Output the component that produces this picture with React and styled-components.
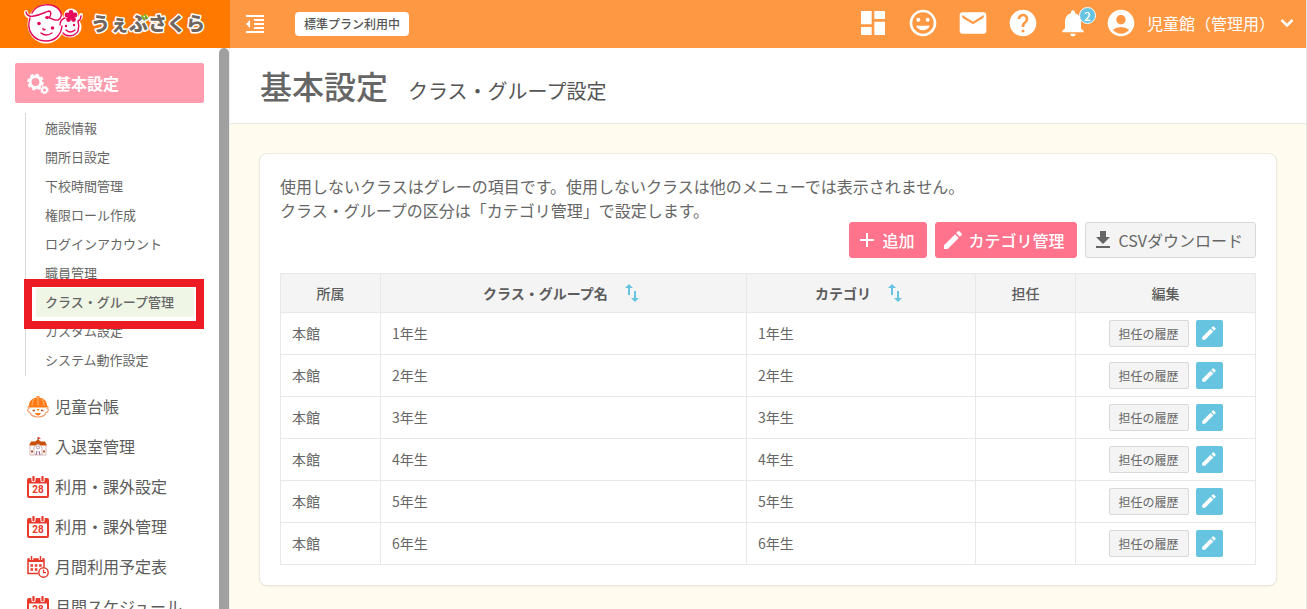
import React from 'react'
import styled, { createGlobalStyle } from 'styled-components';
import {
    MdAccountCircle,
    MdAdd,
    MdDashboard,
    MdEdit,
    MdEmail,
    MdFormatIndentDecrease,
    MdGetApp,
    MdHelp,
    MdImportExport,
    MdMood,
    MdNotifications,
} from 'react-icons/md';

const settingLinks = [
    '施設情報',
    '開所日設定',
    '下校時間管理',
    '権限ロール作成',
    'ログインアカウント',
    '職員管理',
    'クラス・グループ管理',
    'カスタム設定',
    'システム動作設定',
];
const activeLink = 'クラス・グループ管理';

const classes = [1, 2, 3, 4, 5, 6].map(grade => ({
    id: grade,
    place: '本館',
    name: `${grade}年生`,
    category: `${grade}年生`,
}));

const LogoImage = () => (
    <svg viewBox="0 0 230 48" width="230" height="48" role="img" aria-label="うぇぶさくら">
        <g fill="#fff" stroke="#fff" strokeWidth="3">
            <ellipse cx="46" cy="24" rx="17" ry="18" />
            <ellipse cx="70" cy="27" rx="10" ry="9" />
            <circle cx="71" cy="16" r="6" />
            <path d="M26 12q0 4 5 5M81 15q0 4-4 5" fill="none" strokeWidth="4" strokeLinecap="round" />
        </g>
        <g fill="none" stroke="#e5085a" strokeWidth="1.4" strokeLinecap="round">
            <path d="M30 18c-4 12 3 23 16 23 9 0 15-6 16-15" />
            <path d="M26 12c1 4 4 5 8 4 7-1 11-4 15-5 3 1 2 6-1 7s-3-2 0-1 6 4 10 3c4-2 4-6 2-9-6-9-23-8-28 2" />
            <path d="M63 33c3 4 12 4 15-2 1-4 1-7 0-10 2-1 3-3 3-5" />
            <path d="M60 25c0-3 2-6 5-7M41 33q5 4 11 0M43 28.500q0 2 2 1M66 30q4 4 9 0" />
        </g>
        <g fill="#e5085a">
            <circle cx="39" cy="23.500" r="1.800" />
            <circle cx="52.500" cy="28" r="1.800" />
            <circle cx="66" cy="26" r="1.200" />
            <circle cx="74" cy="25" r="1.200" />
            <circle cx="71" cy="12.500" r="2.400" />
            <circle cx="75" cy="15" r="2.400" />
            <circle cx="73.500" cy="19.500" r="2.400" />
            <circle cx="68.500" cy="19.500" r="2.400" />
            <circle cx="67" cy="15" r="2.400" />
            <circle cx="71" cy="16" r="3" />
        </g>
        <LogoText x="91" y="31">うぇぶさくら</LogoText>
        <path d="M142 16l2 3M145 15l2 3" stroke="#7cb518" strokeWidth="2" strokeLinecap="round" />
    </svg>
)

const ChevronIcon = () => (
    <svg viewBox="0 0 24 24" width="24" height="24" fill="none" stroke="currentColor" strokeWidth="2.500" aria-hidden="true">
        <path d="M6.500 9l5.500 5.500L17.500 9" />
    </svg>
)

const GearsIcon = () => (
    <svg viewBox="0 0 22 22" width="22" height="22" fill="none" stroke="#fff" aria-hidden="true">
        <circle cx="8.500" cy="9" r="5.400" strokeWidth="3" />
        <circle cx="8.500" cy="9" r="7" strokeWidth="2.600" strokeDasharray="3.200 2.298" />
        <circle cx="17.500" cy="17" r="2.500" strokeWidth="1.800" />
        <circle cx="17.500" cy="17" r="3.500" strokeWidth="1.400" strokeDasharray="1.600 1.149" />
    </svg>
)

const ChildIcon = () => (
    <svg viewBox="0 0 22 22" width="22" height="22" fill="none" aria-hidden="true">
        <path d="M2.500 12.500C0 12 0 16 3 16.500c1 3 4 4.500 8 4.500s7-1.500 8-4.500c3-.5 3-4.500.5-4" stroke="#f39a6b" strokeWidth="1.100" />
        <path d="M2 9.500C2 4.500 6 1.500 11 1.500s9 3 9 8l2 2H0z" fill="#ff7a14" />
        <path d="M7.500 3C5.500 5 5 7 5 9.500M14.500 3c2 2 2.500 4 2.500 6.500M11 2v7.500" stroke="#ffd3ae" strokeWidth=".7" />
        <path d="M9.500.800h3" stroke="#ff7a14" strokeWidth="1.400" />
        <path d="M9.500 13h3l-1.500 2z" fill="#ff7a14" />
        <path d="M5.500 14.500h2.500M14 14.500h2.500" stroke="#b5562a" strokeWidth="1.400" />
        <path d="M8 17h6q-1 2.500-3 2.500t-3-2.500z" fill="#ff7a14" />
    </svg>
)

const SchoolIcon = () => (
    <svg viewBox="0 0 22 22" width="22" height="22" fill="none" aria-hidden="true">
        <path d="M11 6V1" stroke="#7d4a3a" />
        <path d="M11 1l3 1.200-3 1.300z" fill="#e83828" />
        <path d="M2 9.500l2-4h4l3-2 3 2h4l2 4z" fill="#c8500a" />
        <path d="M3 10v9h16v-9M7 19v-8l4-3 4 3v8" fill="#fff" stroke="#d3b0b0" strokeWidth=".9" />
        <circle cx="11" cy="11.500" r="1.500" stroke="#a98a9a" strokeWidth=".8" />
        <path d="M9 19l1-4M13 19l-1-4" stroke="#8d5a86" />
        <path d="M4 14.500h2v2H4zM16 14.500h2v2h-2z" fill="#b0522a" />
    </svg>
)

const CalendarIcon = () => (
    <svg viewBox="0 0 22 22" width="22" height="22" aria-hidden="true">
        <path d="M2 2h18a2 2 0 0 1 2 2v16a2 2 0 0 1-2 2H2a2 2 0 0 1-2-2V4a2 2 0 0 1 2-2z" fill="#e8392b" />
        <path d="M2 7.500h18v12.500H2z" fill="#fff" />
        <path d="M6.500 0v4M15.500 0v4" stroke="#fff" strokeWidth="4.400" strokeLinecap="round" />
        <path d="M6.500 1v3.500M15.500 1v3.500" stroke="#e8392b" strokeWidth="2.200" strokeLinecap="round" />
        <CalendarDay x="11" y="17">28</CalendarDay>
    </svg>
)

const CalendarClockIcon = () => (
    <svg viewBox="0 0 22 22" width="22" height="22" fill="none" stroke="#e8392b" aria-hidden="true">
        <path d="M11 17.500H1V3h16v8" strokeWidth="1.500" />
        <path d="M1 4.500h16" strokeWidth="3" />
        <path d="M4.500 0v4M13.500 0v4" stroke="#fff" strokeWidth="3.500" />
        <path d="M4.500 0v4M13.500 0v4" strokeWidth="1.500" />
        <path d="M3.500 9.500H15M3.500 13.500H12" strokeWidth="2.400" strokeDasharray="2.600 1.700" />
        <circle cx="16.500" cy="16.500" r="4.700" fill="#fff" strokeWidth="1.500" />
        <path d="M16.500 13.500v3.200h2.500" strokeWidth="1.300" />
    </svg>
)

const menus = [
    { label: '児童台帳', Icon: ChildIcon },
    { label: '入退室管理', Icon: SchoolIcon },
    { label: '利用・課外設定', Icon: CalendarIcon },
    { label: '利用・課外管理', Icon: CalendarIcon },
    { label: '月間利用予定表', Icon: CalendarClockIcon },
    { label: '月間スケジュール', Icon: CalendarIcon },
];

const Header = () => (
    <HeaderBar>
        <Logo href="#"><LogoImage /></Logo>
        <HeaderLeft>
            <IconButton aria-label="メニューを閉じる"><MdFormatIndentDecrease size={24} /></IconButton>
            <PlanLabel>標準プラン利用中</PlanLabel>
        </HeaderLeft>
        <HeaderRight>
            <IconButton aria-label="ダッシュボード"><MdDashboard size={32} /></IconButton>
            <IconButton aria-label="児童"><MdMood size={32} /></IconButton>
            <IconButton aria-label="メール"><MdEmail size={32} /></IconButton>
            <IconButton aria-label="ヘルプ"><MdHelp size={32} /></IconButton>
            <IconButton aria-label="お知らせ">
                <MdNotifications size={32} />
                <Count>2</Count>
            </IconButton>
            <Account>
                <MdAccountCircle size={32} />
                <AccountName>児童館（管理用）</AccountName>
                <ChevronIcon />
            </Account>
        </HeaderRight>
    </HeaderBar>
)

const Sidebar = () => (
    <Side>
        <SideMenu>
            <CurrentMenu href="#"><GearsIcon />基本設定</CurrentMenu>
            <SubList>
                {settingLinks.map(label => (
                    <li key={label}>
                        <SubLink href="#" $active={label === activeLink}>
                            {label}
                            {label === activeLink && <Marker />}
                        </SubLink>
                    </li>
                ))}
            </SubList>
            {menus.map(({ label, Icon }) => (
                <MenuLink key={label} href="#"><Icon />{label}</MenuLink>
            ))}
        </SideMenu>
        <ScrollThumb />
    </Side>
)

const ClassTable = () => (
    <Table>
        <colgroup>
            <Col $width="100px" />
            <Col />
            <Col $width="23.5%" />
            <Col $width="100px" />
            <Col $width="180px" />
        </colgroup>
        <thead>
            <tr>
                <Th>所属</Th>
                <Th $sortable><Sort>クラス・グループ名<MdImportExport size={24} /></Sort></Th>
                <Th $sortable><Sort>カテゴリ<MdImportExport size={24} /></Sort></Th>
                <Th>担任</Th>
                <Th>編集</Th>
            </tr>
        </thead>
        <tbody>
            {classes.map(item => (
                <tr key={item.id}>
                    <Td>{item.place}</Td>
                    <Td>{item.name}</Td>
                    <Td>{item.category}</Td>
                    <Td />
                    <Td>
                        <RowActions>
                            <HistoryButton>担任の履歴</HistoryButton>
                            <EditButton aria-label={`${item.name}を編集`}><MdEdit size={18} /></EditButton>
                        </RowActions>
                    </Td>
                </tr>
            ))}
        </tbody>
    </Table>
)

const App = () => {
    return (
        <Page>
            <GlobalStyle />
            <Header />
            <Body>
                <Sidebar />
                <Main>
                    <TitleBar>
                        <Title>基本設定</Title>
                        <SubTitle>クラス・グループ設定</SubTitle>
                    </TitleBar>
                    <Card>
                        <Lead>
                            使用しないクラスはグレーの項目です。使用しないクラスは他のメニューでは表示されません。<br />
                            クラス・グループの区分は「カテゴリ管理」で設定します。
                        </Lead>
                        <Actions>
                            <ActionButton $primary><MdAdd size={24} />追加</ActionButton>
                            <ActionButton $primary><MdEdit size={24} />カテゴリ管理</ActionButton>
                            <ActionButton><MdGetApp size={24} />CSVダウンロード</ActionButton>
                        </Actions>
                        <ClassTable />
                    </Card>
                </Main>
            </Body>
        </Page>
    )
}

export default App

const GlobalStyle = createGlobalStyle`
    * {
        box-sizing: border-box;
    }
    body {
        margin: 0;
        color: #666;
        font-family: "Noto Sans CJK JP", "Noto Sans", sans-serif;
        font-size: 16px;
    }
    button {
        font-family: inherit;
        cursor: pointer;
    }
    a {
        color: inherit;
        text-decoration: none;
    }
    svg {
        flex: none;
    }
`;

const Page = styled.div`
    display: flex;
    flex-direction: column;
    height: 100vh;
    overflow: hidden;
    border-right: 1px solid #e4e4e4;
`;

const HeaderBar = styled.header`
    display: flex;
    flex: none;
    height: 48px;
    background: #ff9843;
    color: #fff;
`;

const Logo = styled.a`
    display: flex;
    width: 230px;
    background: #ff7800;
`;

const LogoText = styled.text`
    fill: #70665f;
    stroke: #fff;
    stroke-width: 3px;
    stroke-linejoin: round;
    paint-order: stroke;
    font-size: 19px;
    font-weight: 900;
`;

const CalendarDay = styled.text`
    fill: #e8392b;
    font-family: "Roboto", sans-serif;
    font-size: 10px;
    font-weight: 700;
    text-anchor: middle;
`;

const HeaderLeft = styled.div`
    display: flex;
    align-items: center;
    gap: 28px;
    padding-left: 13px;
    padding-bottom: 1px;
`;

const HeaderRight = styled.div`
    display: flex;
    align-items: center;
    gap: 18px;
    margin-left: auto;
    padding-right: 7px;
    padding-bottom: 2px;
`;

const IconButton = styled.button`
    position: relative;
    display: flex;
    padding: 0;
    border: 0;
    background: none;
    color: inherit;
`;

const Count = styled.span`
    position: absolute;
    top: 0;
    right: -7px;
    width: 17px;
    height: 17px;
    border: 1px solid #fff;
    border-radius: 50%;
    background: #67c4e0;
    font-size: 12px;
    font-weight: 500;
    line-height: 15px;
    text-align: center;
`;

const Account = styled(IconButton)`
    align-items: center;
    margin-left: -2px;
    font-size: 16px;
`;

const AccountName = styled.span`
    margin-left: 10px;
`;

const PlanLabel = styled.span`
    padding: 0 9px;
    border-radius: 4px;
    background: #fff;
    color: #555;
    font-size: 12px;
    font-weight: 500;
    line-height: 24px;
`;

const Body = styled.div`
    display: flex;
    flex: 1;
    min-height: 0;
`;

const Side = styled.aside`
    display: flex;
    flex: none;
    width: 230px;
    overflow: hidden;
    border-right: 1px solid #eee;
`;

const SideMenu = styled.nav`
    flex: 1;
    padding: 15px;
`;

const ScrollThumb = styled.div`
    width: 10px;
    border-radius: 5px 5px 0 0;
    background: #a0a0a0;
`;

const MenuLink = styled.a`
    display: flex;
    align-items: center;
    gap: 6px;
    height: 40px;
    padding-left: 12px;
    color: #5c5c5c;
    white-space: nowrap;

    svg {
        margin-top: 2px;
    }
`;

const CurrentMenu = styled(MenuLink)`
    border-radius: 2px;
    background: #ff9dae;
    color: #fff;
    font-weight: 700;
`;

const SubList = styled.ul`
    margin: 10px;
    padding: 1px 0;
    border-left: 1px solid #d8d8d8;
    list-style: none;
`;

const SubLink = styled.a`
    position: relative;
    display: block;
    margin-left: 10px;
    padding: 0 0 2px 9px;
    border-radius: 2px;
    background: ${({ $active }) => $active ? '#f0f6e6' : 'none'};
    font-size: 13px;
    font-weight: ${({ $active }) => $active ? 500 : 400};
    line-height: 27px;
`;

const Marker = styled.span`
    position: absolute;
    inset: -9px -10px -12px -12px;
    z-index: 1;
    border: 8px solid #ed1c24;
`;

const Main = styled.main`
    flex: 1;
    min-width: 0;
    overflow: hidden;
    background: #fffbee;
`;

const TitleBar = styled.div`
    display: flex;
    align-items: baseline;
    gap: 20px;
    height: 76px;
    padding: 13px 30px 0;
    border-bottom: 1px solid #e9e9e9;
    background: #fff;
`;

const Title = styled.h1`
    margin: 0;
    font-size: 32px;
    font-weight: 500;
    line-height: 48px;
`;

const SubTitle = styled.span`
    color: #555;
    font-size: 20px;
`;

const Card = styled.section`
    margin: 29px 29px 0;
    padding: 20px;
    border: 1px solid #ece8de;
    border-radius: 8px;
    background: #fff;
    box-shadow: 0 1px 2px rgba(0, 0, 0, .06);
`;

const Lead = styled.p`
    margin: 0;
    line-height: 24px;
`;

const Actions = styled.div`
    display: flex;
    justify-content: flex-end;
    gap: 8px;
    margin-bottom: 15px;
`;

const ActionButton = styled.button`
    display: flex;
    align-items: center;
    gap: 3px;
    height: 36px;
    padding: 0 12px 0 5px;
    border: 1px solid ${({ $primary }) => $primary ? '#ff738c' : '#d8d8d8'};
    border-radius: 3px;
    background: ${({ $primary }) => $primary ? '#ff738c' : '#f4f4f4'};
    color: ${({ $primary }) => $primary ? '#fff' : '#666'};
    font-size: 16px;
    font-weight: ${({ $primary }) => $primary ? 500 : 400};
`;

const Table = styled.table`
    width: 100%;
    border-collapse: collapse;
    table-layout: fixed;
    font-size: 14px;
`;

const Col = styled.col`
    width: ${({ $width }) => $width || 'auto'};
`;

const Th = styled.th`
    height: 39px;
    padding: 0;
    border: 1px solid #e8e8e8;
    background: #f4f4f4;
    color: #5c5c5c;
    font-weight: ${({ $sortable }) => $sortable ? 700 : 500};
`;

const Sort = styled.button`
    display: inline-flex;
    align-items: center;
    gap: 12px;
    padding: 0;
    border: 0;
    background: none;
    color: inherit;
    font-size: 14px;
    font-weight: inherit;
    vertical-align: middle;

    svg {
        color: #67c4e0;
    }
`;

const Td = styled.td`
    height: 42px;
    padding: 0 11px 1px;
    border: 1px solid #e8e8e8;
`;

const RowActions = styled.div`
    display: flex;
    justify-content: center;
    gap: 7px;
`;

const HistoryButton = styled.button`
    width: 80px;
    height: 27px;
    padding: 0;
    border: 1px solid #d8d8d8;
    border-radius: 2px;
    background: #f4f4f4;
    color: #666;
    font-size: 12px;
`;

const EditButton = styled.button`
    display: flex;
    align-items: center;
    justify-content: center;
    width: 27px;
    height: 27px;
    padding: 0;
    border: 0;
    border-radius: 2px;
    background: #67c4e0;
    color: #fff;
`;
